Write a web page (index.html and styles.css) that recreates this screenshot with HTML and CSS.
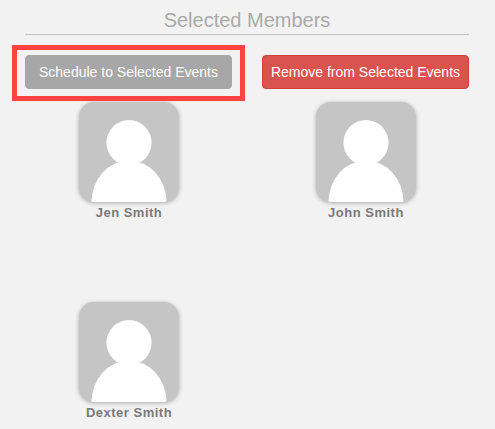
FILE: index.html
```html
<!DOCTYPE html>
<html lang="en">
<head>
<meta charset="utf-8">
<title>Selected Members</title>
<link rel="stylesheet" href="styles.css">
</head>
<body>
<svg class="defs" aria-hidden="true">
  <symbol id="person" viewBox="0 0 100 100">
    <circle cx="50" cy="40.7" r="22.6"/>
    <ellipse cx="50" cy="100" rx="37.5" ry="41.3"/>
  </symbol>
</svg>
<main class="panel">
  <h2 class="title">Selected Members</h2>
  <div class="actions">
    <div class="highlighted">
      <button class="btn btn-schedule">Schedule to Selected Events</button>
    </div>
    <button class="btn btn-remove">Remove from Selected Events</button>
  </div>
  <div class="members">
    <div class="member">
      <div class="avatar"><svg><use href="#person"/></svg></div>
      <div class="name">Jen Smith</div>
    </div>
    <div class="member">
      <div class="avatar"><svg><use href="#person"/></svg></div>
      <div class="name">John Smith</div>
    </div>
    <div class="member">
      <div class="avatar"><svg><use href="#person"/></svg></div>
      <div class="name">Dexter Smith</div>
    </div>
  </div>
</main>
</body>
</html>
```

FILE: styles.css
```css
* { box-sizing: border-box; }
body {
  margin: 0;
  background: #f2f2f2;
  font-family: "Liberation Sans", Arial, sans-serif;
}
.defs { display: none; }
.panel { padding: 0 26px 0 25px; }
.title {
  margin: 0;
  height: 35px;
  padding-top: 8px;
  border-bottom: 1px solid #c2c2c2;
  color: #aaa;
  font-size: 20px;
  font-weight: 400;
  line-height: 24px;
  text-align: center;
}
.actions, .members {
  display: grid;
  grid-template-columns: 207px 207px;
  column-gap: 30px;
}
.actions { padding-top: 20px; }
.highlighted { position: relative; }
.highlighted::after {
  content: "";
  position: absolute;
  inset: -10px -13px -12px -13px;
  border: 5px solid #ff4343;
}
.btn {
  display: block;
  width: 100%;
  height: 34px;
  padding: 0;
  border: 1px solid;
  border-radius: 4px;
  color: #fff;
  font: 14px/20px "Liberation Sans", Arial, sans-serif;
  white-space: nowrap;
}
.btn-schedule { background: #a7a7a7; border-color: #a7a7a7; }
.btn-remove { background: #d9534f; border-color: #d43f3a; }
.members {
  grid-template-rows: 200px auto;
  padding-top: 13px;
}
.member { padding-left: 54px; width: 154px; }
.avatar {
  width: 100px;
  height: 100px;
  border-radius: 15px;
  overflow: hidden;
  background: #c5c5c5;
  box-shadow: 0 1px 4px rgba(0, 0, 0, .3);
}
.avatar svg {
  display: block;
  width: 100px;
  height: 100px;
  fill: #fff;
}
.name {
  margin: 2px -20px 0;
  color: #7a7a7a;
  font-size: 13px;
  font-weight: 700;
  letter-spacing: .5px;
  line-height: 18px;
  text-align: center;
}
```
